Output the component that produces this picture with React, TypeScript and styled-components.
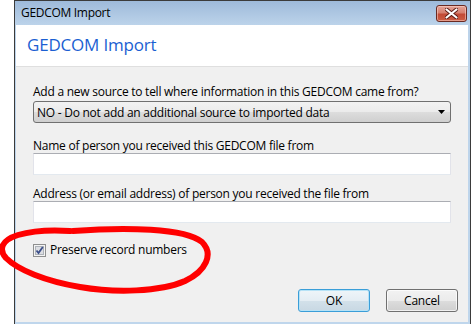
import React from "react";
import styled, { createGlobalStyle } from "styled-components";

const Global = createGlobalStyle`
  html, body { margin: 0; padding: 0; background: #ffffff; }
  body {
    font-family: "Open Sans", "Noto Sans", sans-serif;
    font-size: 12px;
    color: #000000;
  }
  * { box-sizing: border-box; }
`;

const Page = styled.div`
  position: relative;
  width: 472px;
  height: 324px;
  overflow: hidden;
  padding-left: 14px;
`;

const Window = styled.div`
  width: 457px;
  height: 324px;
  border: 1px solid #3b3b3b;
  border-bottom: none;
  background: linear-gradient(#9ebada 0px, #bcd3ea 24px, #bfd6ec 100%);
  display: flex;
  flex-direction: column;
  padding: 0 2px 2px 1px;
`;

const TitleBar = styled.div`
  height: 24px;
  flex: none;
  display: flex;
  align-items: center;
  justify-content: space-between;
  padding: 0 1px 2px 5px;
`;

const TitleText = styled.span`
  font-size: 12px;
  letter-spacing: -0.3px;
  color: #000;
`;

const CloseButton = styled.div`
  width: 31px;
  height: 17px;
  border: 1px solid #6a2a22;
  border-radius: 3px;
  background: linear-gradient(#e4a397 0%, #d6806f 45%, #c24a35 55%, #cc5d43 100%);
  box-shadow: inset 0 0 0 1px rgba(255, 220, 210, 0.5);
  display: flex;
  align-items: center;
  justify-content: center;
  margin-top: 2px;
`;

const Client = styled.div`
  flex: 1;
  display: flex;
  flex-direction: column;
  background: #f0f0f0;
`;

const Header = styled.div`
  height: 42px;
  flex: none;
  background: #ffffff;
  border-bottom: 1px solid #dfdfdf;
  padding: 9px 0 0 11px;
`;

const MainInstruction = styled.div`
  font-size: 17px;
  line-height: 22px;
  color: #1b5fd2;
  letter-spacing: -0.2px;
`;

const Content = styled.div`
  flex: 1;
  display: flex;
  flex-direction: column;
`;

const Form = styled.div`
  display: flex;
  flex-direction: column;
  padding: 18px 17px 0 17px;
`;

const Label = styled.div<{ $gap: number }>`
  line-height: 14px;
  margin-top: ${(p) => p.$gap}px;
  letter-spacing: -0.25px;
  white-space: nowrap;
`;

const Select = styled.div`
  margin-top: 2px;
  height: 22px;
  border: 1px solid #707070;
  border-radius: 3px;
  background: linear-gradient(#f2f2f2 0%, #ebebeb 50%, #dddddd 50%, #cfcfcf 100%);
  display: flex;
  align-items: center;
  justify-content: space-between;
  padding: 0 5px 0 3px;
  letter-spacing: -0.25px;
`;

const TextBox = styled.div`
  height: 22px;
  background: #ffffff;
  border: 1px solid #e2e3ea;
  border-top-color: #abadb3;
  border-bottom-color: #e3e9ef;
`;

const CheckRow = styled.label`
  display: flex;
  align-items: center;
  gap: 4px;
  margin-top: 20px;
  line-height: 14px;
  letter-spacing: -0.25px;
`;

const Footer = styled.div`
  margin-top: auto;
  display: flex;
  justify-content: flex-end;
  gap: 16px;
  padding: 0 10px 10px 0;
`;

const Button = styled.div<{ $default?: boolean }>`
  width: 72px;
  height: 23px;
  border-radius: 3px;
  display: flex;
  align-items: center;
  justify-content: center;
  letter-spacing: -0.2px;
  border: 1px solid ${(p) => (p.$default ? "#3a9ed8" : "#707070")};
  background: ${(p) =>
    p.$default
      ? "linear-gradient(#eef5f9 0%, #e4edf3 50%, #d3e1ea 50%, #c8d8e3 100%)"
      : "linear-gradient(#f2f2f2 0%, #ebebeb 50%, #dddddd 50%, #cfcfcf 100%)"};
  box-shadow: ${(p) =>
    p.$default ? "inset 0 0 0 1px #b6e2f6" : "inset 0 0 0 1px rgba(255,255,255,0.7)"};
`;

const Overlay = styled.svg`
  position: absolute;
  left: 0;
  top: 0;
  pointer-events: none;
`;

const CloseGlyph = () => (
  <svg width="13" height="11" viewBox="0 0 13 11">
    <path
      d="M1.5 1.5 L11.5 9.5 M11.5 1.5 L1.5 9.5"
      stroke="#5a1a12"
      strokeWidth="4"
      strokeLinecap="round"
    />
    <path
      d="M1.5 1.5 L11.5 9.5 M11.5 1.5 L1.5 9.5"
      stroke="#ffffff"
      strokeWidth="2.2"
      strokeLinecap="round"
    />
  </svg>
);

const ArrowGlyph = () => (
  <svg width="7" height="4" viewBox="0 0 7 4">
    <path d="M0 0 H7 L3.5 4 Z" fill="#000" />
  </svg>
);

const CheckGlyph = () => (
  <svg width="13" height="13" viewBox="0 0 13 13">
    <rect x="0.5" y="0.5" width="12" height="12" fill="#f4f4f4" stroke="#8e8f8f" />
    <rect x="2.5" y="2.5" width="8" height="8" fill="#dcdee3" stroke="#aeb3b9" />
    <path d="M3.5 6.5 L5.5 9 L9.8 3" fill="none" stroke="#3c4f8a" strokeWidth="1.8" />
  </svg>
);

export default function App() {
  return (
    <Page>
      <Global />
      <Window>
        <TitleBar>
          <TitleText>GEDCOM Import</TitleText>
          <CloseButton>
            <CloseGlyph />
          </CloseButton>
        </TitleBar>
        <Client>
          <Header>
            <MainInstruction>GEDCOM Import</MainInstruction>
          </Header>
          <Content>
            <Form>
              <Label $gap={0}>Add a new source to tell where information in this GEDCOM came from?</Label>
              <Select>
                <span>NO - Do not add an additional source to imported data</span>
                <ArrowGlyph />
              </Select>
              <Label $gap={16}>Name of person you received this GEDCOM file from</Label>
              <TextBox />
              <Label $gap={12}>Address (or email address) of person you received the file from</Label>
              <TextBox />
              <CheckRow>
                <CheckGlyph />
                <span>Preserve record numbers</span>
              </CheckRow>
            </Form>
            <Footer>
              <Button $default>OK</Button>
              <Button>Cancel</Button>
            </Footer>
          </Content>
        </Client>
      </Window>
      <Overlay width="472" height="324" viewBox="0 0 472 324">
        <path
          d="M73 231 C125 227, 185 228, 202 242 C214 254, 206 271, 185 281 C160 292, 115 293, 80 287 C45 281, 18 270, 6 258 C-2 249, 2 240, 18 235 C35 230, 55 230, 70 231"
          fill="none"
          stroke="#ff0000"
          strokeWidth="6"
          strokeLinecap="round"
        />
      </Overlay>
    </Page>
  );
}
